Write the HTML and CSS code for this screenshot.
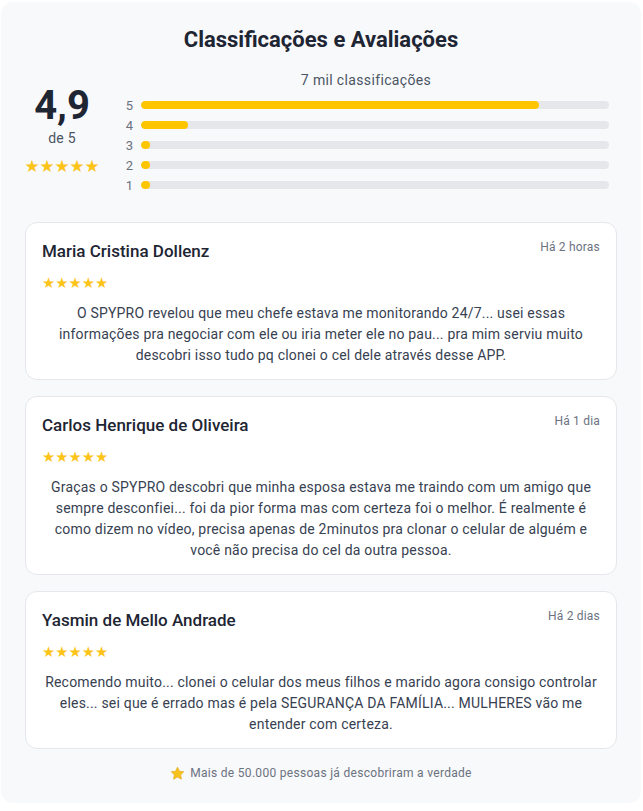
FILE: index.html
```html
<!DOCTYPE html>
<html lang="pt-BR">
<head>
<meta charset="utf-8">
<title>Classificações e Avaliações</title>
<link rel="stylesheet" href="styles.css">
</head>
<body>
<main class="panel">
  <h1 class="title">Classificações e Avaliações</h1>

  <section class="summary">
    <div class="score">
      <div class="score-value">4,9</div>
      <div class="score-of">de 5</div>
      <div class="score-stars">★★★★★</div>
    </div>
    <div class="dist">
      <div class="dist-count">7 mil classificações</div>
      <div class="dist-row"><span class="dist-label">5</span><div class="track"><div class="fill" style="width:85%"></div></div></div>
      <div class="dist-row"><span class="dist-label">4</span><div class="track"><div class="fill" style="width:10%"></div></div></div>
      <div class="dist-row"><span class="dist-label">3</span><div class="track"><div class="fill" style="width:2%"></div></div></div>
      <div class="dist-row"><span class="dist-label">2</span><div class="track"><div class="fill" style="width:2%"></div></div></div>
      <div class="dist-row"><span class="dist-label">1</span><div class="track"><div class="fill" style="width:2%"></div></div></div>
    </div>
  </section>

  <section class="reviews">
    <article class="review">
      <header class="review-head">
        <h2 class="review-name">Maria Cristina Dollenz</h2>
        <span class="review-time">Há 2 horas</span>
      </header>
      <div class="review-stars">★★★★★</div>
      <p class="review-text">O SPYPRO revelou que meu chefe estava me monitorando 24/7... usei essas informações pra negociar com ele ou iria meter ele no pau... pra mim serviu muito descobri isso tudo pq clonei o cel dele através desse APP.</p>
    </article>
    <article class="review">
      <header class="review-head">
        <h2 class="review-name">Carlos Henrique de Oliveira</h2>
        <span class="review-time">Há 1 dia</span>
      </header>
      <div class="review-stars">★★★★★</div>
      <p class="review-text">Graças o SPYPRO descobri que minha esposa estava me traindo com um amigo que sempre desconfiei... foi da pior forma mas com certeza foi o melhor. É realmente é como dizem no vídeo, precisa apenas de 2minutos pra clonar o celular de alguém e você não precisa do cel da outra pessoa.</p>
    </article>
    <article class="review">
      <header class="review-head">
        <h2 class="review-name">Yasmin de Mello Andrade</h2>
        <span class="review-time">Há 2 dias</span>
      </header>
      <div class="review-stars">★★★★★</div>
      <p class="review-text">Recomendo muito... clonei o celular dos meus filhos e marido agora consigo controlar eles... sei que é errado mas é pela SEGURANÇA DA FAMÍLIA... MULHERES vão me entender com certeza.</p>
    </article>
  </section>

  <p class="footer-note">
    <svg class="footer-star" viewBox="0 0 24 24" width="15" height="15" aria-hidden="true"><path d="M12 1.8l3.1 6.5 7 .9-5.1 4.9 1.3 7L12 17.7l-6.3 3.4 1.3-7L1.9 9.2l7-.9z" fill="#f8c21c" stroke="#e0a50c" stroke-width="1" stroke-linejoin="round"/></svg>
    <span>Mais de 50.000 pessoas já descobriram a verdade</span>
  </p>
</main>
</body>
</html>
```

FILE: styles.css
```css
* { box-sizing: border-box; }

html, body {
  margin: 0;
  padding: 0;
  background: #ffffff;
}

body {
  font-family: Roboto, "Noto Sans", sans-serif;
  color: #1f2937;
  padding: 2px 2px 8px 1px;
}

.panel {
  width: 640px;
  height: 801px;
  background: #f8f9fb;
  border-radius: 12px;
  padding: 24px;
}

.title {
  margin: 0;
  text-align: center;
  font-size: 22px;
  line-height: 28px;
  font-weight: 700;
  color: #1e2533;
}

.summary {
  display: flex;
  gap: 24px;
  margin-top: 16px;
  padding-right: 8px;
}

.score {
  width: 74px;
  display: flex;
  flex-direction: column;
  align-items: center;
  padding-top: 16px;
}

.score-value {
  font-size: 40px;
  line-height: 40px;
  font-weight: 700;
  color: #1e2533;
}

.score-of {
  font-size: 14px;
  line-height: 20px;
  color: #4b5563;
  margin-top: 2px;
  letter-spacing: 0.2px;
}

.score-stars {
  margin-top: 8px;
  font-size: 16.8px;
  line-height: 20px;
  color: #fcc419;
  font-family: "DejaVu Sans", sans-serif;
  white-space: nowrap;
}

.dist {
  flex: 1;
  display: flex;
  flex-direction: column;
}

.dist-count {
  text-align: center;
  font-size: 14px;
  line-height: 20px;
  color: #4b5563;
  margin-bottom: 5px;
  letter-spacing: 0.35px;
}

.dist-row {
  display: flex;
  align-items: center;
  gap: 8px;
  height: 20px;
}

.dist-label {
  width: 10px;
  text-align: right;
  font-size: 13px;
  color: #6b7280;
}

.track {
  flex: 1;
  height: 8px;
  background: #e5e7eb;
  border-radius: 4px;
  overflow: hidden;
}

.fill {
  height: 100%;
  min-width: 8px;
  background: #ffc600;
  border-radius: 4px;
}

.reviews {
  display: flex;
  flex-direction: column;
  gap: 16px;
  margin-top: 27px;
}

.review {
  background: #ffffff;
  border: 1px solid #e5e7eb;
  border-radius: 12px;
  padding: 16px 16px 13px;
}

.review-head {
  display: flex;
  justify-content: space-between;
  align-items: flex-start;
}

.review-name {
  margin: 0;
  font-size: 17px;
  line-height: 24px;
  font-weight: 500;
  color: #1e2533;
}

.review-time {
  font-size: 12px;
  line-height: 16px;
  color: #6b7280;
  letter-spacing: 0.2px;
}

.review-stars {
  margin-top: 12px;
  font-size: 14.8px;
  line-height: 16px;
  color: #fcc419;
  font-family: "DejaVu Sans", sans-serif;
}

.review-text {
  margin: 12px 0 0;
  text-align: center;
  font-size: 14px;
  line-height: 21px;
  color: #374151;
  letter-spacing: 0.2px;
}

.footer-note {
  margin: 16px 0 0;
  display: flex;
  justify-content: center;
  align-items: center;
  gap: 5px;
  font-size: 12px;
  line-height: 16px;
  color: #6b7280;
  letter-spacing: 0.3px;
}

.footer-star { flex: none; }
```
